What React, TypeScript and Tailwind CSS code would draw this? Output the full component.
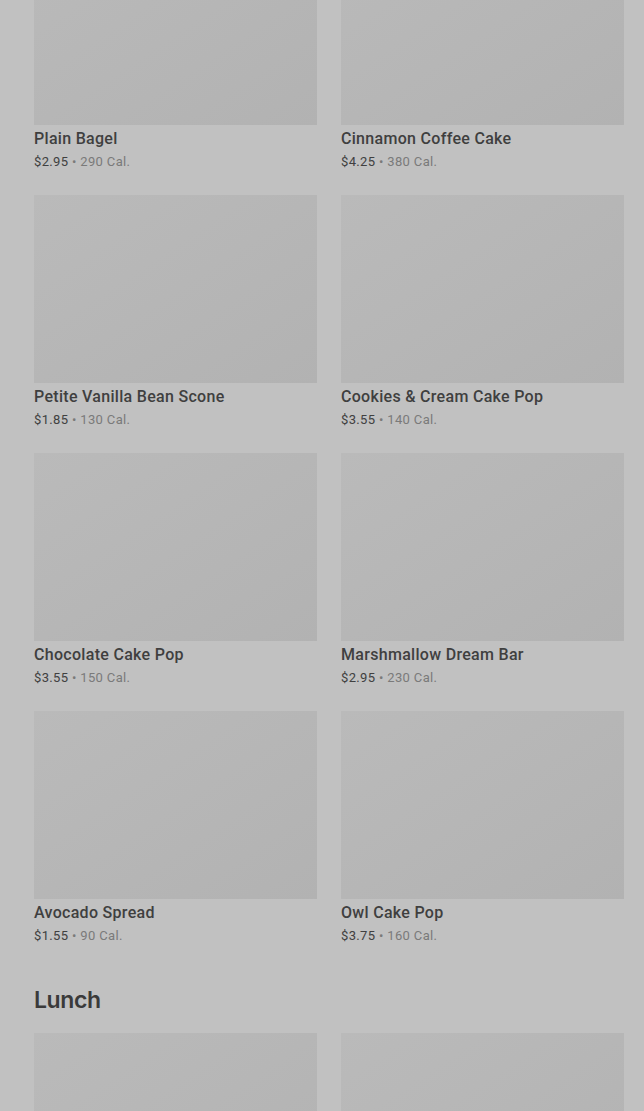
const pastries = [
    { name: 'Plain Bagel', price: '$2.95', cal: '290 Cal.' },
    { name: 'Cinnamon Coffee Cake', price: '$4.25', cal: '380 Cal.' },
    { name: 'Petite Vanilla Bean Scone', price: '$1.85', cal: '130 Cal.' },
    { name: 'Cookies & Cream Cake Pop', price: '$3.55', cal: '140 Cal.' },
    { name: 'Chocolate Cake Pop', price: '$3.55', cal: '150 Cal.' },
    { name: 'Marshmallow Dream Bar', price: '$2.95', cal: '230 Cal.' },
    { name: 'Avocado Spread', price: '$1.55', cal: '90 Cal.' },
    { name: 'Owl Cake Pop', price: '$3.75', cal: '160 Cal.' },
];

const ItemCard = ({ name, price, cal }: { name: string; price: string; cal: string }) => (
    <div className="pb-[22px]">
        <div className="h-[188px] bg-gradient-to-br from-[#bababa] to-[#b2b2b2]" />
        <p className="mt-[2px] text-[16px] leading-[24px] font-medium tracking-[0.3px] text-[#3f3f3f]">{name}</p>
        <p className="text-[13px] leading-[22px] tracking-[0.35px]">
            <span className="text-[#404040]">{price}</span>
            <span className="text-[#7a7a7a]"> • {cal}</span>
        </p>
    </div>
);

const App = () => {
    return (
        <div className="h-[1111px] overflow-hidden bg-[#c1c1c1] pl-[34px] pr-[20px] font-['Roboto',sans-serif]">
            <div className="-mt-[63px] grid grid-cols-2 gap-x-[24px]">
                {pastries.map((item) => (
                    <ItemCard key={item.name} {...item} />
                ))}
            </div>
            <h2 className="mt-[15px] text-[23px] leading-[32px] font-semibold tracking-[-0.4px] text-[#3a3a3a] font-['Inter',sans-serif]">
                Lunch
            </h2>
            <div className="mt-[17px] grid grid-cols-2 gap-x-[24px]">
                <div className="h-[188px] bg-gradient-to-br from-[#bababa] to-[#b2b2b2]" />
                <div className="h-[188px] bg-gradient-to-br from-[#bababa] to-[#b2b2b2]" />
            </div>
        </div>
    );
};

export default App;
